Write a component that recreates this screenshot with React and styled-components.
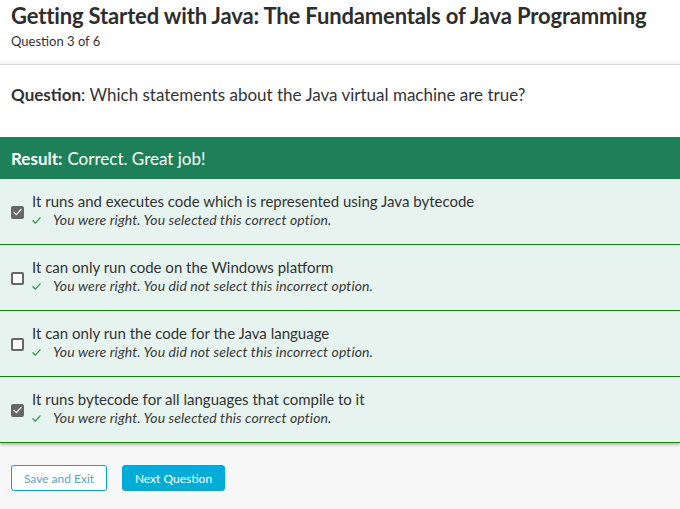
import React from 'react';
import styled, { createGlobalStyle } from 'styled-components';

const GlobalStyle = createGlobalStyle`
  html, body {
    margin: 0;
    padding: 0;
    background: #f7f7f7;
  }
  body {
    font-family: Lato, "Open Sans", Arial, sans-serif;
    color: #333;
  }
`;

const options = [
  { text: 'It runs and executes code which is represented using Java bytecode', checked: true, note: 'You were right. You selected this correct option.' },
  { text: 'It can only run code on the Windows platform', checked: false, note: 'You were right. You did not select this incorrect option.' },
  { text: 'It can only run the code for the Java language', checked: false, note: 'You were right. You did not select this incorrect option.' },
  { text: 'It runs bytecode for all languages that compile to it', checked: true, note: 'You were right. You selected this correct option.' }
];

const Check = ({ size = 9, color = '#2e9a4c', width = 1.4 }) => (
  <svg width={size} height={size} viewBox="0 0 10 10">
    <path d="M1 5.3 L3.8 8 L9 2" fill="none" stroke={color} strokeWidth={width} strokeLinecap="round" strokeLinejoin="round" />
  </svg>
);

const App = () => {
  return (
    <Page>
      <GlobalStyle />
      <Header>
        <Title>Getting Started with Java: The Fundamentals of Java Programming</Title>
        <Counter>Question 3 of 6</Counter>
      </Header>
      <QuestionBlock>
        <strong>Question</strong>: Which statements about the Java virtual machine are true?
      </QuestionBlock>
      <ResultBar>
        <strong>Result:</strong> Correct. Great job!
      </ResultBar>
      <OptionList>
        {options.map((o, i) => (
          <Option key={i}>
            <Box checked={o.checked}>
              {o.checked && <Check size={10} color="#fff" width={1.3} />}
            </Box>
            <OptionBody>
              <OptionText>{o.text}</OptionText>
              <Note>
                <Check />
                <span>{o.note}</span>
              </Note>
            </OptionBody>
          </Option>
        ))}
      </OptionList>
      <Footer>
        <Button width="96px">Save and Exit</Button>
        <Button primary width="103px">Next Question</Button>
      </Footer>
    </Page>
  );
};

const Page = styled.div`
  min-height: 100vh;
  display: flex;
  flex-direction: column;
`;

const Header = styled.header`
  background: #fff;
  padding: 2px 11px 0;
  height: 65px;
  box-sizing: border-box;
  border-bottom: 1px solid #d6d6d6;
  box-shadow: 0 -4px 4px -2px rgba(0, 0, 0, 0.06) inset;
  position: relative;
  z-index: 1;
`;

const Title = styled.h1`
  margin: 0;
  font-size: 22px;
  font-weight: 700;
  line-height: 28px;
  color: #2d2d2d;
  letter-spacing: -0.15px;
`;

const Counter = styled.div`
  font-size: 13px;
  line-height: 16px;
  margin-top: 3px;
  color: #333;
`;

const QuestionBlock = styled.div`
  background: #fff;
  padding: 19px 11px 0;
  height: 72px;
  box-sizing: border-box;
  font-size: 17px;
  line-height: 22px;

  strong {
    font-weight: 700;
  }
`;

const ResultBar = styled.div`
  background: #1e8058;
  color: #fff;
  height: 42px;
  display: flex;
  align-items: center;
  gap: 5px;
  padding: 0 11px;
  font-size: 17px;

  strong {
    font-weight: 700;
  }
`;

const OptionList = styled.div`
  background: #e6f3ee;
  box-shadow: 0 2px 3px rgba(0, 0, 0, 0.25);
  position: relative;
`;

const Option = styled.div`
  display: flex;
  align-items: center;
  height: 66px;
  box-sizing: border-box;
  padding: 0 11px 3px;
  border-bottom: 1px solid #0b870b;
`;

const Box = styled.span`
  width: 13px;
  height: 13px;
  box-sizing: border-box;
  border-radius: 2px;
  border: 2px solid #666;
  background: ${p => (p.checked ? '#666' : '#fff')};
  display: flex;
  align-items: center;
  justify-content: center;
  flex-shrink: 0;
  margin-right: 8px;
  margin-top: 4px;
`;

const OptionBody = styled.div`
  display: flex;
  flex-direction: column;
`;

const OptionText = styled.div`
  font-size: 15px;
  line-height: 20px;
  color: #333;
`;

const Note = styled.div`
  display: flex;
  align-items: center;
  gap: 12px;
  font-size: 14px;
  line-height: 18px;
  font-style: italic;
  color: #3a3a3a;
  letter-spacing: 0.1px;
`;

const Footer = styled.div`
  flex: 1;
  background: #f7f7f7;
  padding: 22px 11px;
  display: flex;
  align-items: flex-start;
  gap: 15px;
`;

const Button = styled.button`
  font-family: Lato, Arial, sans-serif;
  font-size: 12px;
  width: ${p => p.width};
  height: 26px;
  padding: 0;
  border-radius: 3px;
  cursor: pointer;
  border: 1px solid #00a7d2;
  background: ${p => (p.primary ? '#00add7' : '#fff')};
  color: ${p => (p.primary ? '#fff' : '#5aa3c4')};
`;

export default App;
